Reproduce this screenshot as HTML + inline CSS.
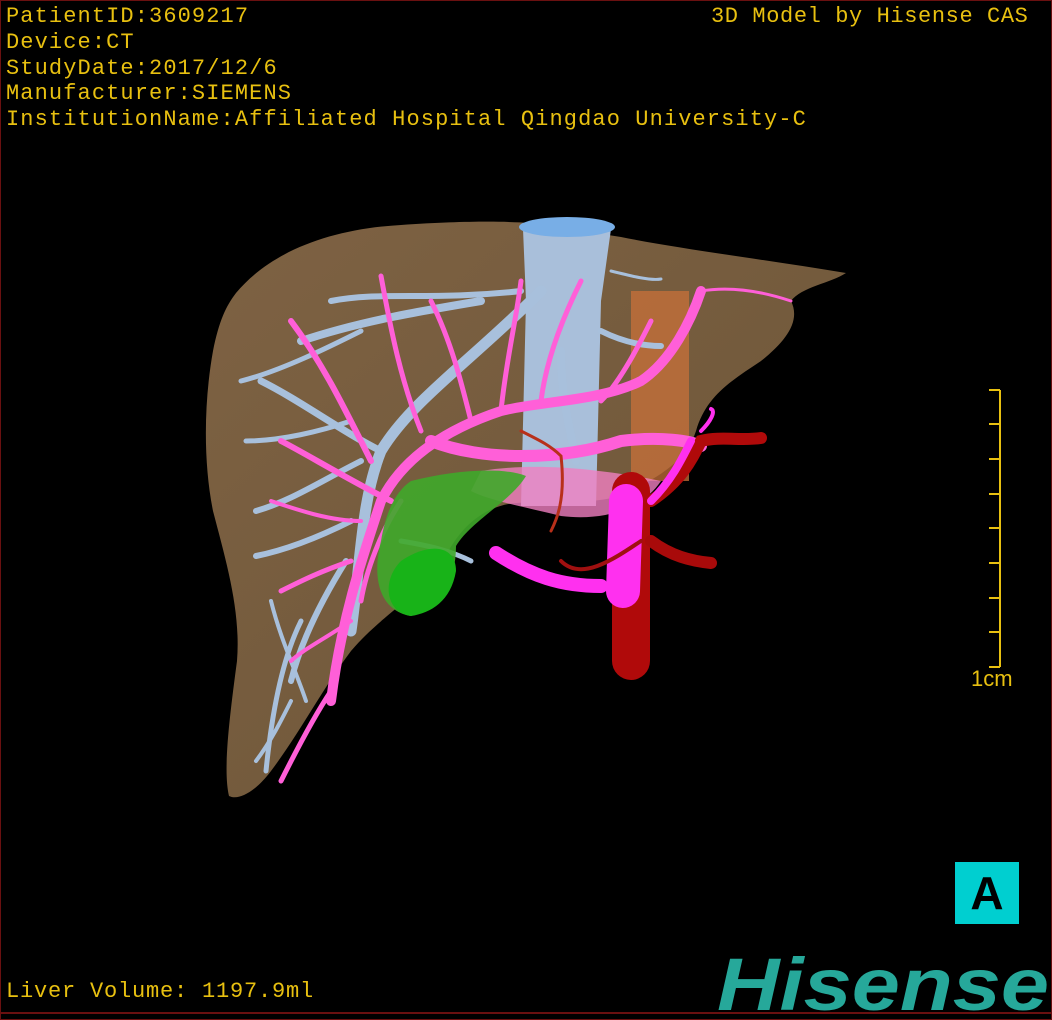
<!DOCTYPE html>
<html><head><meta charset="utf-8">
<style>
html,body{margin:0;padding:0;background:#000;}
#w{position:relative;width:1052px;height:1020px;background:#000;overflow:hidden;box-sizing:border-box;border:1px solid #6a1010;}
.t{position:absolute;color:#e8c010;font-family:"Liberation Mono","Noto Sans CJK SC",monospace;font-size:22px;line-height:24px;white-space:pre;letter-spacing:1.1px;}
svg{position:absolute;left:0;top:0;}
</style></head><body><div id="w">
<svg width="1052" height="1020" viewBox="0 0 1052 1020">
<defs>
<linearGradient id="lv" x1="0" y1="0" x2="1" y2="1">
<stop offset="0" stop-color="#7e6243"/><stop offset="0.6" stop-color="#735a3c"/><stop offset="1" stop-color="#6a5236"/>
</linearGradient>
</defs>
<path d="M235,292 C270,250 330,228 400,224 C460,220 500,220 530,222 L620,236 C680,248 760,258 845,272 C830,282 800,286 790,300 C800,320 785,340 760,360 C730,380 705,395 695,430 C685,460 660,475 620,495 C580,505 540,500 515,502 C480,505 455,530 440,565 C410,600 380,615 350,650 C320,690 300,730 270,770 C255,790 238,800 228,795 C222,770 228,720 236,660 C240,610 225,560 212,510 C202,460 203,400 212,350 C218,320 225,305 235,292 Z" fill="url(#lv)"/>
<rect x="630" y="290" width="58" height="190" fill="#c8703a" opacity="0.75"/>
<path d="M522,228 L610,228 L600,300 L595,505 L520,505 L525,300 Z" fill="#a9bfda"/>
<ellipse cx="566" cy="226" rx="48" ry="10" fill="#78aee6"/>
<g fill="none" stroke="#a8c0dc" stroke-linecap="round">
<path d="M350,630 C360,560 360,500 380,450 C410,400 470,360 540,290" stroke-width="11"/>
<path d="M380,450 C340,430 300,400 260,380" stroke-width="7"/>
<path d="M300,340 C360,320 420,310 480,300" stroke-width="8"/>
<path d="M330,300 C380,290 430,300 520,290" stroke-width="6"/>
<path d="M360,460 C320,480 290,500 255,510" stroke-width="6"/>
<path d="M350,520 C310,540 280,550 255,555" stroke-width="6"/>
<path d="M345,560 C320,600 300,640 290,680" stroke-width="6"/>
<path d="M300,620 C280,660 270,720 265,770" stroke-width="5"/>
<path d="M270,600 C280,640 295,670 305,700" stroke-width="4"/>
<path d="M240,380 C280,370 330,345 360,330" stroke-width="5"/>
<path d="M245,440 C280,440 320,430 350,420" stroke-width="5"/>
<path d="M290,700 C280,720 270,740 255,760" stroke-width="4"/>
<path d="M600,330 C620,340 640,345 660,345" stroke-width="6"/>
<path d="M610,270 C630,275 650,280 660,278" stroke-width="3"/>
<path d="M560,350 C560,400 570,430 575,460" stroke-width="8"/>
<path d="M400,540 C430,545 450,550 470,560" stroke-width="5"/>
</g>
<g fill="none" stroke="#ff5fd8" stroke-linecap="round">
<path d="M330,700 C340,620 360,560 380,500 C400,460 440,430 500,410 C540,400 600,400 640,380 C670,360 690,320 700,290" stroke-width="10"/>
<path d="M430,440 C480,460 560,460 620,440 C660,435 690,440 700,445" stroke-width="12"/>
<path d="M390,500 C350,480 300,450 280,440" stroke-width="6"/>
<path d="M370,460 C340,400 320,360 290,320" stroke-width="6"/>
<path d="M420,430 C400,380 390,330 380,275" stroke-width="5"/>
<path d="M470,420 C460,380 450,340 430,300" stroke-width="5"/>
<path d="M500,410 C505,360 515,320 520,280" stroke-width="5"/>
<path d="M540,400 C545,360 560,320 580,280" stroke-width="5"/>
<path d="M600,400 C620,380 640,340 650,320" stroke-width="5"/>
<path d="M700,290 C730,285 760,290 790,300" stroke-width="3"/>
<path d="M330,690 C310,720 290,760 280,780" stroke-width="5"/>
<path d="M350,560 C320,570 300,580 280,590" stroke-width="5"/>
<path d="M360,520 C330,520 300,510 270,500" stroke-width="4"/>
<path d="M350,620 C320,640 300,650 290,660" stroke-width="4"/>
<path d="M400,500 C380,530 365,570 360,600" stroke-width="5"/>
</g>
<path d="M480,470 C540,460 610,470 660,480 C640,510 600,520 560,515 C520,505 490,500 470,490 Z" fill="#f080c0" opacity="0.8"/>
<path d="M410,480 C450,470 500,465 525,475 C510,500 470,520 455,545 C455,580 440,605 410,615 C380,610 370,580 380,540 C385,510 395,490 410,480 Z" fill="#3fa82a" opacity="0.9"/>
<path d="M400,560 C430,540 455,545 455,570 C450,600 430,612 410,615 C385,612 380,580 400,560 Z" fill="#18b318"/>
<g fill="none" stroke-linecap="round">
<path d="M630,490 L630,660" stroke="#b00a0a" stroke-width="38"/>
<path d="M650,500 C680,480 690,460 700,440 C720,435 740,440 760,437" stroke="#b00a0a" stroke-width="12"/>
<path d="M650,540 C670,555 690,560 710,562" stroke="#a80a0a" stroke-width="12"/>
<path d="M495,552 C530,575 560,585 600,585" stroke="#ff30ef" stroke-width="14"/>
<path d="M625,500 L622,590" stroke="#ff30ef" stroke-width="34"/>
<path d="M650,500 C670,480 680,460 690,440" stroke="#ff30ef" stroke-width="8"/>
<path d="M700,430 C710,420 715,410 710,408" stroke="#ff30ef" stroke-width="4"/>
<path d="M520,430 C540,440 550,445 560,455 C565,500 555,520 550,530" stroke="#b8301a" stroke-width="3"/>
<path d="M560,560 C580,580 610,560 640,540" stroke="#a01010" stroke-width="4"/>
</g>
<line x1="999" y1="389" x2="999" y2="666" stroke="#e8c010" stroke-width="2"/>
<g stroke="#e8c010" stroke-width="2">
<line x1="988" y1="389" x2="999" y2="389"/><line x1="988" y1="423" x2="999" y2="423"/><line x1="988" y1="458" x2="999" y2="458"/><line x1="988" y1="493" x2="999" y2="493"/><line x1="988" y1="527" x2="999" y2="527"/><line x1="988" y1="562" x2="999" y2="562"/><line x1="988" y1="597" x2="999" y2="597"/><line x1="988" y1="631" x2="999" y2="631"/><line x1="988" y1="666" x2="999" y2="666"/>
</g>
<line x1="0" y1="1012" x2="1052" y2="1012" stroke="#6a1010" stroke-width="2"/>
</svg>
<div class="t" style="left:5px;top:4px">PatientID:3609217</div>
<div class="t" style="left:5px;top:30px">Device:CT</div>
<div class="t" style="left:5px;top:56px">StudyDate:2017/12/6</div>
<div class="t" style="left:5px;top:81px">Manufacturer:SIEMENS</div>
<div class="t" style="left:5px;top:107px">InstitutionName:Affiliated Hospital Qingdao University-C</div>
<div class="t" style="left:710px;top:4px;letter-spacing:0.6px">3D Model by Hisense CAS</div>
<div class="t" style="left:970px;top:666px;font-family:'Liberation Sans',sans-serif;font-size:22px;letter-spacing:0">1cm</div>
<div class="t" style="left:5px;top:979px;letter-spacing:0.8px">Liver Volume: 1197.9ml</div>
<div style="position:absolute;left:954px;top:861px;width:64px;height:62px;background:#00cfd0;color:#000;font-family:'Liberation Sans',sans-serif;font-size:46px;font-weight:bold;line-height:62px;text-align:center;">A</div>
<div style="position:absolute;left:716px;top:946px;color:#26a89a;font-family:'Liberation Sans',sans-serif;font-weight:bold;font-style:italic;font-size:74px;line-height:76px;transform:scaleX(1.17);transform-origin:0 0;white-space:nowrap;">Hisense</div>
</div></body></html>
